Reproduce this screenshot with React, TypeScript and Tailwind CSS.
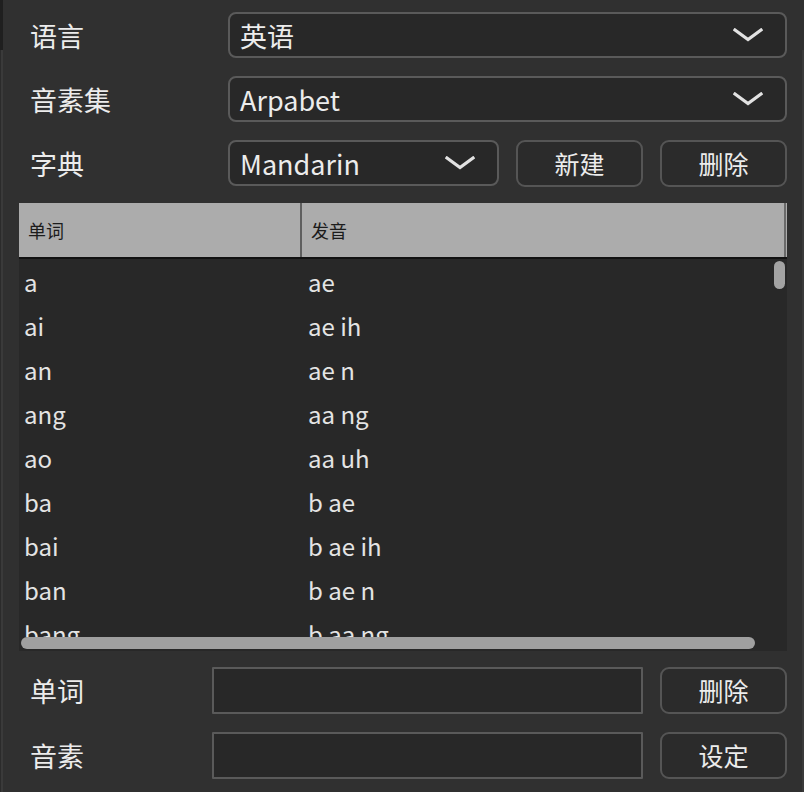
import React from "react";

const rows: [string, string][] = [
  ["a", "ae"],
  ["ai", "ae ih"],
  ["an", "ae n"],
  ["ang", "aa ng"],
  ["ao", "aa uh"],
  ["ba", "b ae"],
  ["bai", "b ae ih"],
  ["ban", "b ae n"],
  ["bang", "b aa ng"],
];

function Chevron() {
  return (
    <svg width="30" height="14" viewBox="0 0 30 14" className="shrink-0">
      <path d="M2 2 L15 11.5 L28 2" fill="none" stroke="#e2e2e2" strokeWidth="3.2" strokeLinecap="square" />
    </svg>
  );
}

function Select({ value, className }: { value: string; className: string }) {
  return (
    <div
      className={`h-[46px] rounded-[8px] border-2 border-[#5a5a5a] bg-[#282828] flex items-center justify-between pl-[10px] pr-[22px] ${className}`}
    >
      <span className="text-[27px] text-[#ececec] leading-none">{value}</span>
      <Chevron />
    </div>
  );
}

function Button({ label }: { label: string }) {
  return (
    <div className="w-[127px] h-[47px] shrink-0 rounded-[9px] border-2 border-[#555] bg-[#2b2b2b] flex items-center justify-center text-[25px] text-[#ececec] leading-none">
      {label}
    </div>
  );
}

export default function App() {
  return (
    <div
      className="w-[804px] h-[792px] bg-[#303030] flex overflow-hidden"
      style={{ fontFamily: '"Noto Sans CJK SC", "Noto Sans", sans-serif' }}
    >
      <div className="w-[3px] shrink-0 flex flex-col">
        <div className="h-[50px] bg-[#1f1f1f]" />
        <div className="flex-1 flex">
          <div className="w-[1px] bg-[#2b2b2b]" />
          <div className="w-[2px] bg-[#3a3a3a]" />
        </div>
      </div>
      <div className="flex-1 flex flex-col pl-[16px] pr-[14px] pt-[12px]">
        <div className="flex items-center h-[46px]">
          <div className="w-[209px] shrink-0 pl-[11px] text-[27px] text-[#ececec] leading-none">语言</div>
          <Select value="英语" className="flex-1" />
        </div>
        <div className="flex items-center h-[46px] mt-[18px]">
          <div className="w-[209px] shrink-0 pl-[11px] text-[27px] text-[#ececec] leading-none">音素集</div>
          <Select value="Arpabet" className="flex-1" />
        </div>
        <div className="flex items-center h-[46px] mt-[18px] gap-[17px]">
          <div className="w-[192px] shrink-0 pl-[11px] text-[27px] text-[#ececec] leading-none">字典</div>
          <Select value="Mandarin" className="w-[271px] shrink-0" />
          <Button label="新建" />
          <Button label="删除" />
        </div>

        <div className="mt-[17px] h-[448px] flex flex-col bg-[#282828] overflow-hidden">
          <div className="h-[54px] shrink-0 bg-[#acacac] flex border-b-2 border-[#121212] box-content">
            <div className="w-[283px] shrink-0 border-r-2 border-[#5f5f5f] flex items-center pl-[9px] text-[18px] text-[#1c1c1c]">
              单词
            </div>
            <div className="flex-1 flex items-center pl-[9px] text-[18px] text-[#1c1c1c]">发音</div>
            <div className="w-[2px] bg-[#6a6a6a] mr-[1px]" />
          </div>
          <div className="flex-1 flex relative overflow-hidden">
            <div className="flex-1 flex flex-col pt-[1px]">
              {rows.map(([w, p]) => (
                <div key={w} className="h-[44px] shrink-0 flex items-center text-[24px] text-[#e4e4e4] leading-none">
                  <div className="w-[284px] shrink-0 pl-[5px]">{w}</div>
                  <div className="pl-[5px]">{p}</div>
                </div>
              ))}
            </div>
            <div className="absolute right-[2px] top-[2px] w-[11px] h-[28px] rounded-full bg-[#a3a3a3]" />
            <div className="absolute left-0 right-0 bottom-0 h-[14px] bg-[#282828] pl-[2px] pr-[32px]">
              <div className="h-[12px] rounded-full bg-[#a0a0a0]" />
            </div>
          </div>
        </div>

        <div className="flex items-center mt-[16px] gap-[17px]">
          <div className="w-[176px] shrink-0 pl-[11px] text-[27px] text-[#ececec] leading-none">单词</div>
          <div className="flex-1 h-[47px] border-2 border-[#5a5a5a] bg-[#282828] rounded-[1px]" />
          <Button label="删除" />
        </div>
        <div className="flex items-center mt-[18px] gap-[17px]">
          <div className="w-[176px] shrink-0 pl-[11px] text-[27px] text-[#ececec] leading-none">音素</div>
          <div className="flex-1 h-[47px] border-2 border-[#5a5a5a] bg-[#282828] rounded-[1px]" />
          <Button label="设定" />
        </div>
      </div>
      <div className="w-[3px] shrink-0 flex flex-col">
        <div className="h-[50px]" />
        <div className="flex-1 flex">
          <div className="w-[1px]" />
          <div className="w-[2px] bg-[#3a3a3a]" />
        </div>
      </div>
    </div>
  );
}
